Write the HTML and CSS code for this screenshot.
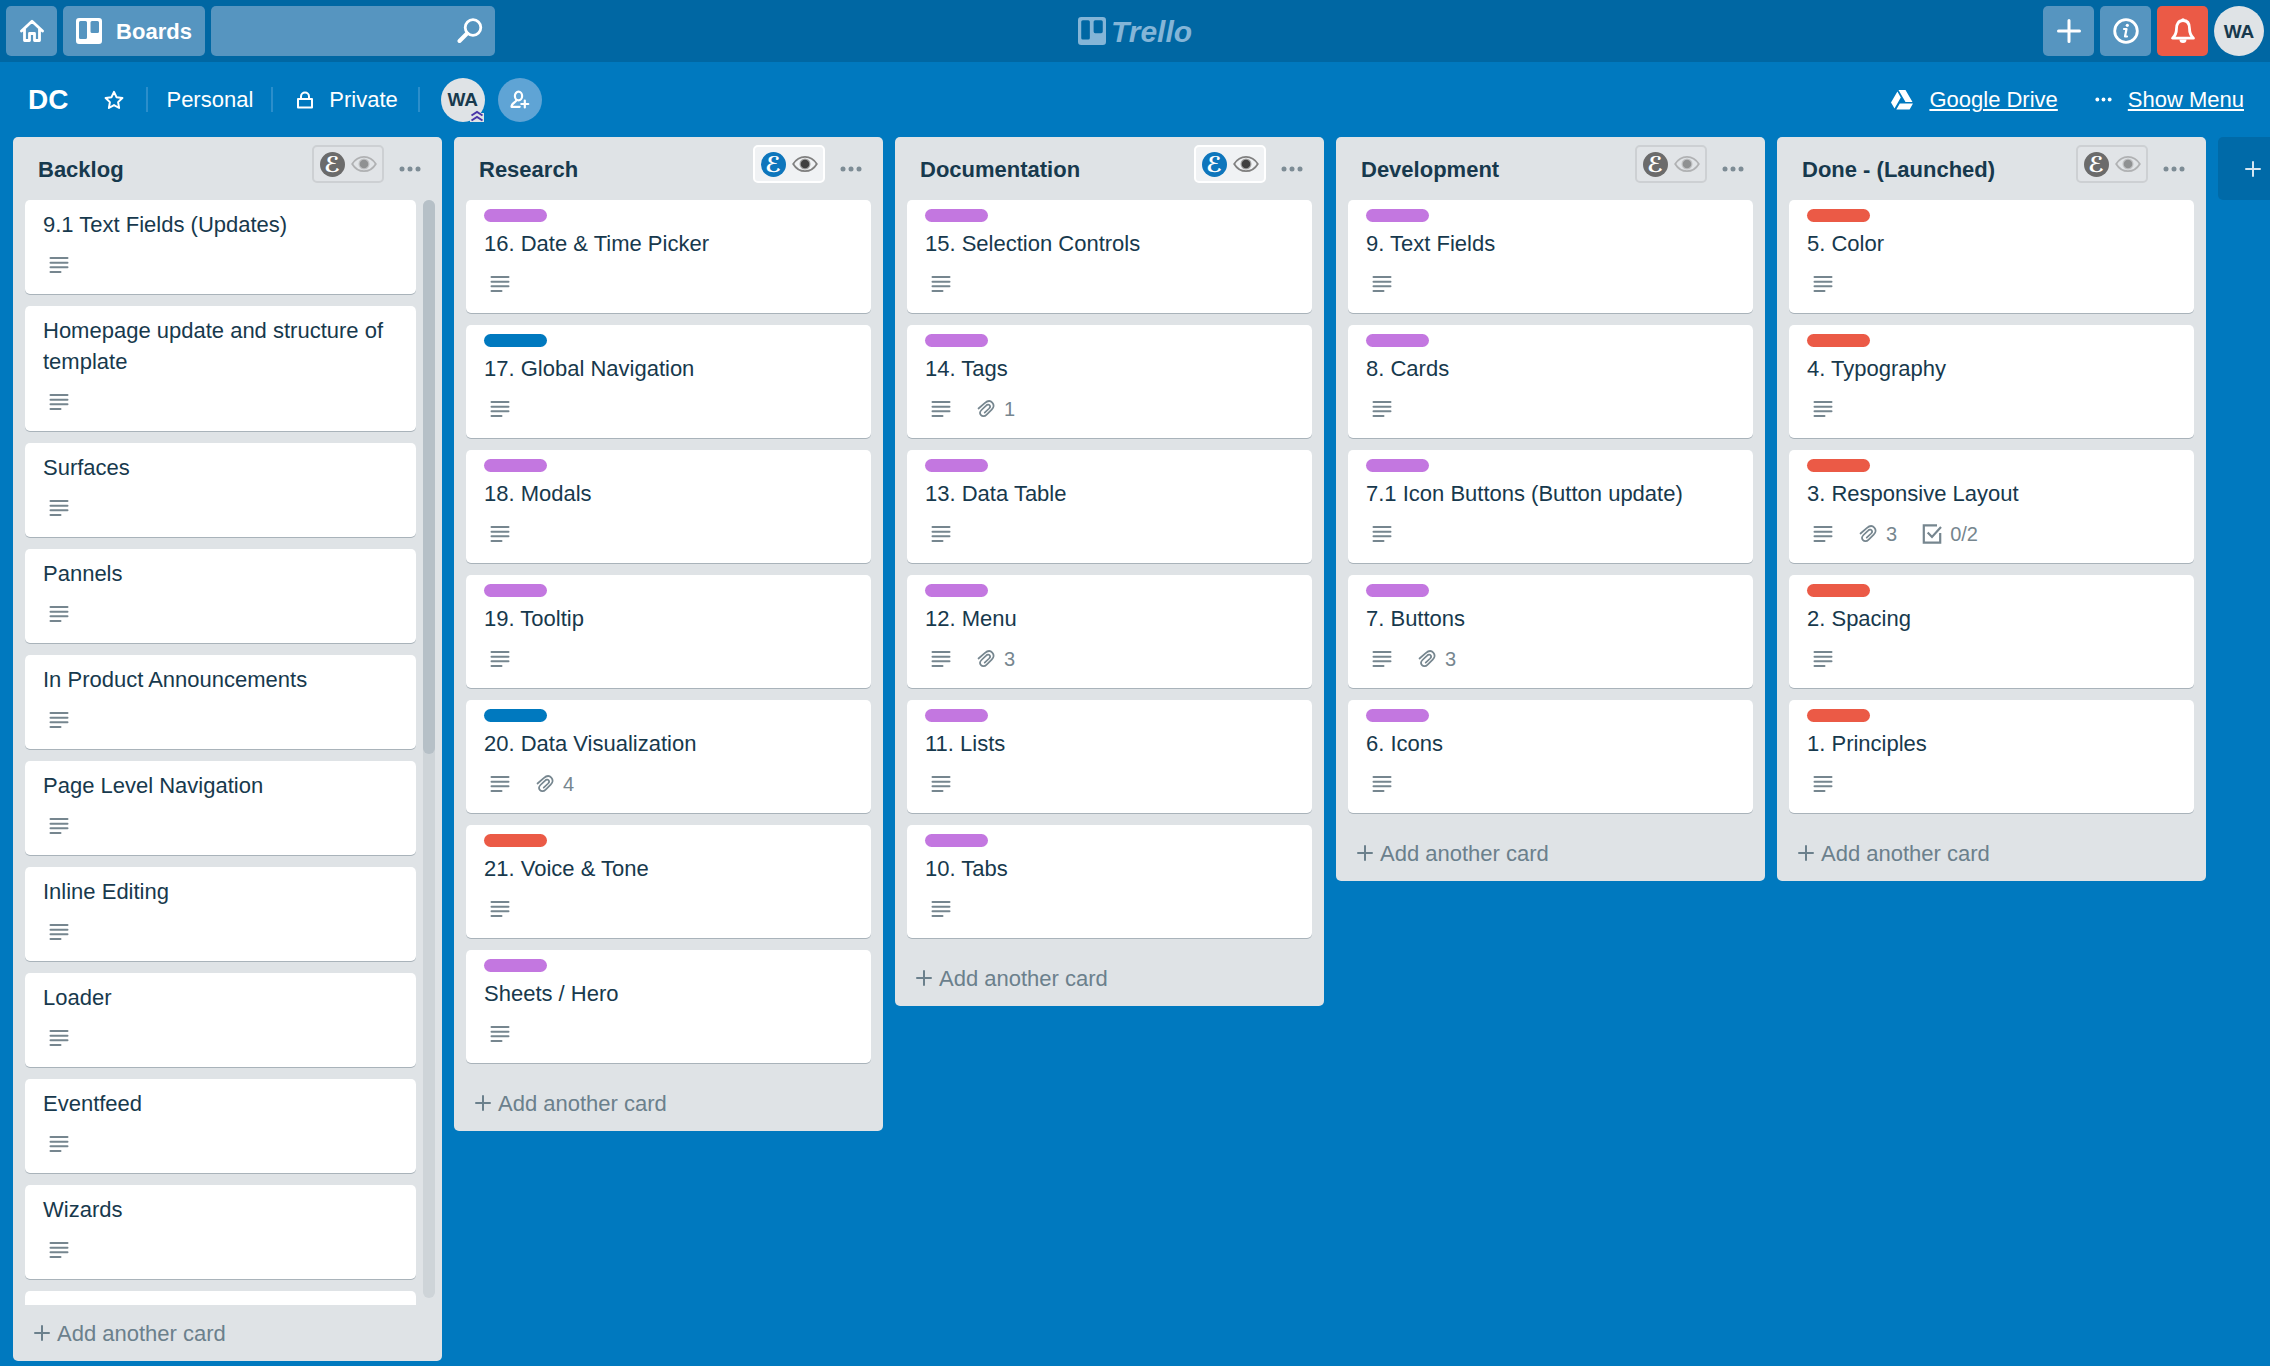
FILE: index.html
```html
<!DOCTYPE html>
<html lang="en">
<head>
<meta charset="utf-8">
<meta name="viewport" content="width=device-width, initial-scale=1">
<title>DC | Trello</title>
<link rel="stylesheet" href="styles.css">
</head>
<body>
<svg class="sprite" aria-hidden="true">
  <symbol id="i-home" viewBox="0 0 24 24"><path d="M1.5 12 12 2.2 22.500 12M4.500 10v11.500h5v-7h5v7h5V10" fill="none" stroke="currentColor" stroke-width="2.800" stroke-linejoin="round" stroke-linecap="round"/></symbol>
  <symbol id="i-board" viewBox="0 0 26 26"><path fill="currentColor" fill-rule="evenodd" d="M3 0h20a3 3 0 0 1 3 3v20a3 3 0 0 1-3 3H3a3 3 0 0 1-3-3V3a3 3 0 0 1 3-3zM4.500 3a1.500 1.500 0 0 0-1.500 1.500v15a1.500 1.500 0 0 0 1.500 1.500h5a1.500 1.500 0 0 0 1.500-1.500v-15A1.500 1.500 0 0 0 9.500 3zm11.500 0a1.500 1.500 0 0 0-1.500 1.500v9a1.500 1.500 0 0 0 1.500 1.500h5.500a1.500 1.500 0 0 0 1.500-1.500v-9A1.500 1.500 0 0 0 21.500 3z"/></symbol>
  <symbol id="i-search" viewBox="0 0 26 26"><g fill="none" stroke="currentColor" stroke-linecap="round"><circle cx="16" cy="9.500" r="7.800" stroke-width="2.800"/><path d="M10 15.500 2.500 23" stroke-width="4"/></g></symbol>
  <symbol id="i-plus" viewBox="0 0 24 24"><path d="M12 1.500v21M1.500 12h21" fill="none" stroke="currentColor" stroke-width="3" stroke-linecap="round"/></symbol>
  <symbol id="i-plus-thin" viewBox="0 0 16 16"><path d="M8 1v14M1 8h14" fill="none" stroke="currentColor" stroke-width="2" stroke-linecap="round"/></symbol>
  <symbol id="i-info" viewBox="0 0 26 26"><circle cx="13" cy="13" r="11.300" fill="none" stroke="currentColor" stroke-width="2.800"/><path d="M11 11h2.500l-1.500 7.500h2" fill="none" stroke="currentColor" stroke-width="2.200" stroke-linecap="round" stroke-linejoin="round"/><circle cx="14.300" cy="7.300" r="1.600" fill="currentColor"/></symbol>
  <symbol id="i-bell" viewBox="0 0 26 26"><path d="M13 2.500c-4.500 0-6.500 3.500-6.500 8 0 5-1.500 7.500-4 9.700h21c-2.500-2.200-4-4.700-4-9.700 0-4.500-2-8-6.500-8z" fill="none" stroke="currentColor" stroke-width="2.800" stroke-linejoin="round"/><path d="M9.500 21.500h7a3.500 3.500 0 0 1-7 0z" fill="currentColor"/><circle cx="13" cy="2" r="1.800" fill="currentColor"/></symbol>
  <symbol id="i-star" viewBox="0 0 20 20"><path d="m10 1.800 2.500 5.400 5.900.8-4.300 4.100 1 5.900-5.100-2.900L4.900 18l1-5.900L1.600 8l5.900-.8z" fill="none" stroke="currentColor" stroke-width="2" stroke-linejoin="round"/></symbol>
  <symbol id="i-lock" viewBox="0 0 18 18"><path d="M2 8h14v8.500H2zM5 8V5.500a4 4 0 0 1 8 0V8" fill="none" stroke="currentColor" stroke-width="2" stroke-linejoin="round"/></symbol>
  <symbol id="i-member" viewBox="0 0 20 20"><g fill="none" stroke="currentColor" stroke-width="2.200" stroke-linecap="round" stroke-linejoin="round"><ellipse cx="8.500" cy="6" rx="3.600" ry="4.300"/><path d="M6.500 10c0 2.500-4.800 2-5 6.800h8.200M14.800 10.500v7M11.300 14h7"/></g></symbol>
  <symbol id="i-chevrons" viewBox="0 0 14 12"><path fill="#dfe3e6" d="M0 3h14v9H0z"/><path d="m1.500 5.500 5.500-3.500 5.500 3.500M1.500 10.500l5.500-3.500 5.500 3.500" fill="none" stroke="#4a35a8" stroke-width="1.900"/></symbol>
  <symbol id="i-drive" viewBox="0 0 22 20"><path fill="currentColor" d="M7.500 0h7l7 12h-7zM6.400 1.600 9.800 7.600 3.500 18.500 0 12.500zM8.800 13.400H22l-3.400 6.100H5.300z"/></symbol>
  <symbol id="i-dots" viewBox="0 0 22 6"><g fill="currentColor"><circle cx="3" cy="3" r="2.500"/><circle cx="11" cy="3" r="2.500"/><circle cx="19" cy="3" r="2.500"/></g></symbol>
  <symbol id="i-eye" viewBox="0 0 26 18"><path d="M1.200 9C4 4.300 8 1.800 13 1.800S22 4.300 24.800 9C22 13.700 18 16.200 13 16.200S4 13.700 1.200 9z" fill="none" stroke="#808080" stroke-width="1.800"/><circle cx="13" cy="9" r="5.500" fill="#a0a0a0"/><circle cx="13" cy="9" r="4.300" fill="#404040"/></symbol>
  <symbol id="i-desc" viewBox="0 0 32 32"><path d="M7.500 23h10M7.500 18.300h17M7.500 13.700h17M7.500 9h17" fill="none" stroke="currentColor" stroke-width="2" stroke-linecap="round"/></symbol>
  <symbol id="i-clip" viewBox="0 0 32 32"><path d="m8.500 15.500 6.200-5.400c3-2.600 5.800-2.500 7.600-.5 1.800 2.100 1.600 4.800-.6 7l-5.300 5.200c-1.700 1.700-4 1.900-5.400.4-1.400-1.500-1.100-3.600.5-5.200l4.600-4.400c1.200-1.200 2.700-1.300 3.500-.4.800.9.600 2.200-.5 3.300l-4.400 4.200" fill="none" stroke="currentColor" stroke-width="1.700" stroke-linecap="round"/></symbol>
  <symbol id="i-check" viewBox="0 0 32 32"><path d="M21 7.300H7.800v17.400h16.400V15M11.700 14.500l4.300 4.500L25 9" fill="none" stroke="currentColor" stroke-width="2.200"/></symbol>
</svg>

<header class="topbar">
  <div class="topbar-side">
    <a class="tile" href="#" aria-label="Home"><svg class="icon-24"><use href="#i-home"/></svg></a>
    <button class="tile tile-boards" type="button"><svg class="icon-26"><use href="#i-board"/></svg>Boards</button>
    <form class="search">
      <input class="search-input" type="search" aria-label="Search">
      <svg class="icon-26 search-icon"><use href="#i-search"/></svg>
    </form>
  </div>
  <a class="logo" href="#"><svg class="logo-mark"><use href="#i-board"/></svg>Trello</a>
  <div class="topbar-side topbar-end">
    <button class="tile" type="button" aria-label="Create"><svg class="icon-24"><use href="#i-plus"/></svg></button>
    <button class="tile" type="button" aria-label="Information"><svg class="icon-26"><use href="#i-info"/></svg></button>
    <button class="tile tile-alert" type="button" aria-label="Notifications"><svg class="icon-26"><use href="#i-bell"/></svg></button>
    <button class="avatar avatar-large" type="button">WA</button>
  </div>
</header>

<main class="board">
  <div class="board-header">
    <h1 class="board-name">DC</h1>
    <button class="star" type="button" aria-label="Star board"><svg class="icon-20"><use href="#i-star"/></svg></button>
    <a class="board-link" href="#">Personal</a>
    <a class="board-link board-private" href="#"><svg class="icon-18"><use href="#i-lock"/></svg>Private</a>
    <div class="members">
      <button class="avatar" type="button">WA<svg class="admin-badge"><use href="#i-chevrons"/></svg></button>
      <button class="avatar avatar-add" type="button" aria-label="Invite"><svg class="icon-20"><use href="#i-member"/></svg></button>
    </div>
    <nav class="board-actions">
      <a class="action" href="#"><svg class="drive-icon"><use href="#i-drive"/></svg><span class="action-text">Google Drive</span></a>
      <a class="action" href="#"><svg class="menu-dots"><use href="#i-dots"/></svg><span class="action-text">Show Menu</span></a>
    </nav>
  </div>

  <div class="lists">
    <section class="list">
      <header class="list-header">
        <h2 class="list-title">Backlog</h2>
        <button class="watch watch-off" type="button" aria-label="Toggle list"><span class="watch-logo">ℰ</span><svg class="eye"><use href="#i-eye"/></svg></button>
        <button class="list-menu" type="button" aria-label="List actions"><svg class="dots"><use href="#i-dots"/></svg></button>
      </header>
      <div class="scroll-area">
        <ul class="cards cards-scroll">
          <li class="card"><h3 class="card-title">9.1 Text Fields (Updates)</h3><div class="badges"><svg class="badge-icon"><use href="#i-desc"/></svg></div></li>
          <li class="card"><h3 class="card-title">Homepage update and structure of template</h3><div class="badges"><svg class="badge-icon"><use href="#i-desc"/></svg></div></li>
          <li class="card"><h3 class="card-title">Surfaces</h3><div class="badges"><svg class="badge-icon"><use href="#i-desc"/></svg></div></li>
          <li class="card"><h3 class="card-title">Pannels</h3><div class="badges"><svg class="badge-icon"><use href="#i-desc"/></svg></div></li>
          <li class="card"><h3 class="card-title">In Product Announcements</h3><div class="badges"><svg class="badge-icon"><use href="#i-desc"/></svg></div></li>
          <li class="card"><h3 class="card-title">Page Level Navigation</h3><div class="badges"><svg class="badge-icon"><use href="#i-desc"/></svg></div></li>
          <li class="card"><h3 class="card-title">Inline Editing</h3><div class="badges"><svg class="badge-icon"><use href="#i-desc"/></svg></div></li>
          <li class="card"><h3 class="card-title">Loader</h3><div class="badges"><svg class="badge-icon"><use href="#i-desc"/></svg></div></li>
          <li class="card"><h3 class="card-title">Eventfeed</h3><div class="badges"><svg class="badge-icon"><use href="#i-desc"/></svg></div></li>
          <li class="card"><h3 class="card-title">Wizards</h3><div class="badges"><svg class="badge-icon"><use href="#i-desc"/></svg></div></li>
          <li class="card card-blank"></li>
        </ul>
        <div class="scrollbar"><div class="scrollbar-thumb"></div></div>
      </div>
      <button class="add-card" type="button"><svg class="icon-16"><use href="#i-plus-thin"/></svg>Add another card</button>
    </section>

    <section class="list">
      <header class="list-header">
        <h2 class="list-title">Research</h2>
        <button class="watch" type="button" aria-label="Toggle list"><span class="watch-logo">ℰ</span><svg class="eye"><use href="#i-eye"/></svg></button>
        <button class="list-menu" type="button" aria-label="List actions"><svg class="dots"><use href="#i-dots"/></svg></button>
      </header>
      <ul class="cards">
        <li class="card"><span class="label purple"></span><h3 class="card-title">16. Date &amp; Time Picker</h3><div class="badges"><svg class="badge-icon"><use href="#i-desc"/></svg></div></li>
        <li class="card"><span class="label blue"></span><h3 class="card-title">17. Global Navigation</h3><div class="badges"><svg class="badge-icon"><use href="#i-desc"/></svg></div></li>
        <li class="card"><span class="label purple"></span><h3 class="card-title">18. Modals</h3><div class="badges"><svg class="badge-icon"><use href="#i-desc"/></svg></div></li>
        <li class="card"><span class="label purple"></span><h3 class="card-title">19. Tooltip</h3><div class="badges"><svg class="badge-icon"><use href="#i-desc"/></svg></div></li>
        <li class="card"><span class="label blue"></span><h3 class="card-title">20. Data Visualization</h3><div class="badges"><svg class="badge-icon"><use href="#i-desc"/></svg><span class="badge"><svg class="badge-icon"><use href="#i-clip"/></svg>4</span></div></li>
        <li class="card"><span class="label red"></span><h3 class="card-title">21. Voice &amp; Tone</h3><div class="badges"><svg class="badge-icon"><use href="#i-desc"/></svg></div></li>
        <li class="card"><span class="label purple"></span><h3 class="card-title">Sheets / Hero</h3><div class="badges"><svg class="badge-icon"><use href="#i-desc"/></svg></div></li>
      </ul>
      <button class="add-card" type="button"><svg class="icon-16"><use href="#i-plus-thin"/></svg>Add another card</button>
    </section>

    <section class="list">
      <header class="list-header">
        <h2 class="list-title">Documentation</h2>
        <button class="watch" type="button" aria-label="Toggle list"><span class="watch-logo">ℰ</span><svg class="eye"><use href="#i-eye"/></svg></button>
        <button class="list-menu" type="button" aria-label="List actions"><svg class="dots"><use href="#i-dots"/></svg></button>
      </header>
      <ul class="cards">
        <li class="card"><span class="label purple"></span><h3 class="card-title">15. Selection Controls</h3><div class="badges"><svg class="badge-icon"><use href="#i-desc"/></svg></div></li>
        <li class="card"><span class="label purple"></span><h3 class="card-title">14. Tags</h3><div class="badges"><svg class="badge-icon"><use href="#i-desc"/></svg><span class="badge"><svg class="badge-icon"><use href="#i-clip"/></svg>1</span></div></li>
        <li class="card"><span class="label purple"></span><h3 class="card-title">13. Data Table</h3><div class="badges"><svg class="badge-icon"><use href="#i-desc"/></svg></div></li>
        <li class="card"><span class="label purple"></span><h3 class="card-title">12. Menu</h3><div class="badges"><svg class="badge-icon"><use href="#i-desc"/></svg><span class="badge"><svg class="badge-icon"><use href="#i-clip"/></svg>3</span></div></li>
        <li class="card"><span class="label purple"></span><h3 class="card-title">11. Lists</h3><div class="badges"><svg class="badge-icon"><use href="#i-desc"/></svg></div></li>
        <li class="card"><span class="label purple"></span><h3 class="card-title">10. Tabs</h3><div class="badges"><svg class="badge-icon"><use href="#i-desc"/></svg></div></li>
      </ul>
      <button class="add-card" type="button"><svg class="icon-16"><use href="#i-plus-thin"/></svg>Add another card</button>
    </section>

    <section class="list">
      <header class="list-header">
        <h2 class="list-title">Development</h2>
        <button class="watch watch-off" type="button" aria-label="Toggle list"><span class="watch-logo">ℰ</span><svg class="eye"><use href="#i-eye"/></svg></button>
        <button class="list-menu" type="button" aria-label="List actions"><svg class="dots"><use href="#i-dots"/></svg></button>
      </header>
      <ul class="cards">
        <li class="card"><span class="label purple"></span><h3 class="card-title">9. Text Fields</h3><div class="badges"><svg class="badge-icon"><use href="#i-desc"/></svg></div></li>
        <li class="card"><span class="label purple"></span><h3 class="card-title">8. Cards</h3><div class="badges"><svg class="badge-icon"><use href="#i-desc"/></svg></div></li>
        <li class="card"><span class="label purple"></span><h3 class="card-title">7.1 Icon Buttons (Button update)</h3><div class="badges"><svg class="badge-icon"><use href="#i-desc"/></svg></div></li>
        <li class="card"><span class="label purple"></span><h3 class="card-title">7. Buttons</h3><div class="badges"><svg class="badge-icon"><use href="#i-desc"/></svg><span class="badge"><svg class="badge-icon"><use href="#i-clip"/></svg>3</span></div></li>
        <li class="card"><span class="label purple"></span><h3 class="card-title">6. Icons</h3><div class="badges"><svg class="badge-icon"><use href="#i-desc"/></svg></div></li>
      </ul>
      <button class="add-card" type="button"><svg class="icon-16"><use href="#i-plus-thin"/></svg>Add another card</button>
    </section>

    <section class="list">
      <header class="list-header">
        <h2 class="list-title">Done - (Launched)</h2>
        <button class="watch watch-off" type="button" aria-label="Toggle list"><span class="watch-logo">ℰ</span><svg class="eye"><use href="#i-eye"/></svg></button>
        <button class="list-menu" type="button" aria-label="List actions"><svg class="dots"><use href="#i-dots"/></svg></button>
      </header>
      <ul class="cards">
        <li class="card"><span class="label red"></span><h3 class="card-title">5. Color</h3><div class="badges"><svg class="badge-icon"><use href="#i-desc"/></svg></div></li>
        <li class="card"><span class="label red"></span><h3 class="card-title">4. Typography</h3><div class="badges"><svg class="badge-icon"><use href="#i-desc"/></svg></div></li>
        <li class="card"><span class="label red"></span><h3 class="card-title">3. Responsive Layout</h3><div class="badges"><svg class="badge-icon"><use href="#i-desc"/></svg><span class="badge"><svg class="badge-icon"><use href="#i-clip"/></svg>3</span><span class="badge"><svg class="badge-icon"><use href="#i-check"/></svg>0/2</span></div></li>
        <li class="card"><span class="label red"></span><h3 class="card-title">2. Spacing</h3><div class="badges"><svg class="badge-icon"><use href="#i-desc"/></svg></div></li>
        <li class="card"><span class="label red"></span><h3 class="card-title">1. Principles</h3><div class="badges"><svg class="badge-icon"><use href="#i-desc"/></svg></div></li>
      </ul>
      <button class="add-card" type="button"><svg class="icon-16"><use href="#i-plus-thin"/></svg>Add another card</button>
    </section>

    <button class="add-list" type="button" aria-label="Add another list"><svg class="icon-16"><use href="#i-plus-thin"/></svg></button>
  </div>
</main>
</body>
</html>
```
FILE: styles.css
```css
* {
  box-sizing: border-box;
}

body {
  margin: 0;
  height: 100vh;
  display: flex;
  flex-direction: column;
  overflow: hidden;
  background: #0079bf;
  color: #17394d;
  font: 22px/31px "Liberation Sans", Arial, sans-serif;
}

h1, h2, h3, ul {
  margin: 0;
  padding: 0;
}

ul {
  list-style: none;
}

a {
  color: inherit;
  text-decoration: none;
}

button {
  margin: 0;
  padding: 0;
  border: 0;
  background: none;
  color: inherit;
  font: inherit;
  cursor: pointer;
}

svg {
  display: block;
  flex: none;
}

.sprite {
  position: absolute;
  width: 0;
  height: 0;
}

.icon-16 { width: 16px; height: 16px; }
.icon-18 { width: 18px; height: 18px; }
.icon-20 { width: 20px; height: 20px; }
.icon-24 { width: 24px; height: 24px; }
.icon-26 { width: 26px; height: 26px; }

/* Top bar */
.topbar {
  flex: none;
  display: flex;
  align-items: center;
  padding: 6px;
  background: #0067a3;
  color: #fff;
}

.topbar-side {
  flex: 1;
  display: flex;
  gap: 6px;
}

.topbar-end {
  justify-content: flex-end;
}

.tile {
  display: flex;
  align-items: center;
  justify-content: center;
  width: 51px;
  height: 50px;
  border-radius: 5px;
  background: #5695c0;
}

.tile-boards {
  gap: 14px;
  width: 142px;
  font-weight: bold;
}

.tile-alert {
  background: #eb5a46;
}

.search {
  display: flex;
  align-items: center;
  width: 284px;
  padding-right: 12px;
  border-radius: 5px;
  background: #5695c0;
}

.search-input {
  flex: 1;
  min-width: 0;
  height: 50px;
  padding: 0 12px;
  border: 0;
  outline: 0;
  background: none;
  color: #fff;
  font: inherit;
}

.logo {
  display: flex;
  align-items: center;
  gap: 5px;
  color: #84b5d7;
  font-size: 30px;
  font-style: italic;
  font-weight: bold;
}

.logo-mark {
  width: 28px;
  height: 28px;
}

.avatar {
  position: relative;
  display: flex;
  align-items: center;
  justify-content: center;
  width: 44px;
  height: 44px;
  border-radius: 50%;
  background: #dfe3e6;
  color: #17394d;
  font-size: 19px;
  font-weight: bold;
}

.avatar-large {
  width: 50px;
  height: 50px;
}

.avatar-add {
  background: #5fa4d5;
  color: #fff;
}

.admin-badge {
  position: absolute;
  right: 1px;
  bottom: 0;
  width: 14px;
  height: 12px;
}

/* Board header */
.board {
  flex: 1;
  min-height: 0;
  display: flex;
  flex-direction: column;
}

.board-header {
  flex: none;
  display: flex;
  align-items: center;
  height: 75px;
  padding: 0 26px 0 28px;
  color: #fff;
}

.board-name {
  margin-right: 14px;
  font-size: 28px;
}

.star {
  display: flex;
  justify-content: center;
  width: 64px;
}

.board-link {
  height: 25px;
  padding: 0 18px;
  border-left: 2px solid #2b8ecb;
  line-height: 25px;
}

.board-private {
  display: flex;
  align-items: center;
  gap: 15px;
  padding: 0 20px 0 23px;
  border-right: 2px solid #2b8ecb;
}

.members {
  display: flex;
  gap: 13px;
  margin-left: 21px;
}

.board-actions {
  display: flex;
  gap: 37px;
  margin-left: auto;
}

.action {
  display: flex;
  align-items: center;
  gap: 16px;
}

.action-text {
  text-decoration: underline;
}

.drive-icon {
  width: 22px;
  height: 20px;
}

.menu-dots {
  width: 17px;
  height: 5px;
}

/* Lists */
.lists {
  flex: 1;
  min-height: 0;
  display: flex;
  align-items: flex-start;
  gap: 12px;
  padding: 0 0 5px 13px;
  overflow: hidden;
}

.list {
  flex: none;
  display: flex;
  flex-direction: column;
  width: 429px;
  max-height: 100%;
  border-radius: 5px;
  background: #dfe3e6;
}

.list-header {
  flex: none;
  display: flex;
  align-items: flex-start;
  height: 63px;
  padding: 8px 21px 0 25px;
}

.list-title {
  flex: 1;
  padding-top: 9px;
  font-size: 22px;
}

.watch {
  display: flex;
  align-items: center;
  justify-content: center;
  gap: 6px;
  width: 72px;
  height: 38px;
  border: 2px solid #fff;
  border-radius: 5px;
  background: #f0f2f4;
}

.watch-logo {
  display: flex;
  align-items: center;
  justify-content: center;
  width: 25px;
  height: 25px;
  border-radius: 50%;
  background: #0e76bc;
  color: #fff;
  font: italic bold 22px/25px "DejaVu Serif", "DejaVu Sans", serif;
}

.eye {
  width: 26px;
  height: 18px;
}

.watch-off {
  border-color: #cdd0d3;
  background: #e1e4e7;
}

.watch-off .watch-logo {
  background: #6b6b6b;
}

.watch-off .eye {
  opacity: 0.5;
}

.list-menu {
  display: flex;
  align-items: center;
  justify-content: flex-end;
  width: 37px;
  height: 47px;
  color: #7d8c95;
}

.dots {
  width: 22px;
  height: 6px;
}

.cards {
  display: flex;
  flex-direction: column;
  gap: 12px;
  padding: 0 12px 12px;
}

.card {
  flex: none;
  padding: 9px 18px 13px;
  border-radius: 5px;
  background: #fff;
  box-shadow: 0 1px 0 #a9b3ba;
}

.card-blank {
  height: 94px;
}

.card-title {
  font-size: 22px;
  font-weight: normal;
}

.label {
  display: block;
  width: 63px;
  height: 13px;
  margin-bottom: 6px;
  border-radius: 7px;
}

.purple { background: #c377e0; }
.blue { background: #0079bf; }
.red { background: #eb5a46; }

.badges {
  display: flex;
  gap: 13px;
  margin-top: 9px;
  color: #76868f;
  font-size: 20px;
}

.badge {
  display: flex;
  align-items: center;
  gap: 2px;
  padding-right: 6px;
}

.badge-icon {
  width: 32px;
  height: 32px;
}

.scroll-area {
  flex: 0 1 auto;
  min-height: 0;
  display: flex;
  gap: 7px;
  padding: 0 7px 0 12px;
}

.cards-scroll {
  flex: 1;
  padding: 0;
  overflow: hidden;
}

.scrollbar {
  width: 12px;
  margin-bottom: 7px;
  border-radius: 6px;
  background: #ced4d8;
}

.scrollbar-thumb {
  height: calc(50% + 5px);
  border-radius: 6px;
  background: #b6c0c7;
}

.add-card {
  flex: none;
  display: flex;
  align-items: center;
  gap: 7px;
  height: 56px;
  padding: 0 21px;
  color: #6b808c;
}

.add-list {
  flex: none;
  display: flex;
  align-items: center;
  width: 429px;
  height: 63px;
  padding: 0 27px;
  border-radius: 5px;
  background: #006aa8;
  color: #d5e6f1;
}
```
